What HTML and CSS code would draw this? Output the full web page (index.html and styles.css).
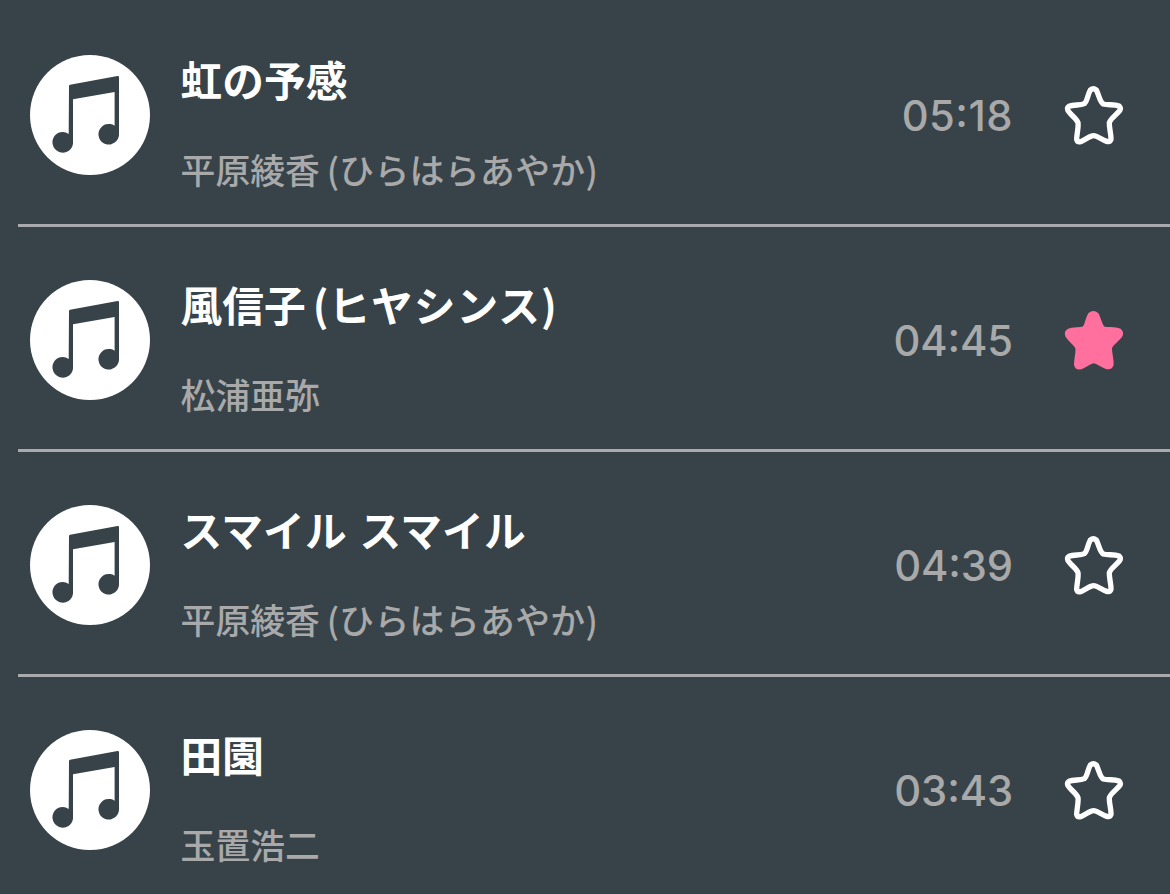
FILE: index.html
```html
<!DOCTYPE html>
<html lang="ja">
<head>
<meta charset="utf-8">
<title>Songs</title>
<link rel="stylesheet" href="styles.css">
</head>
<body>
<svg class="defs" aria-hidden="true">
  <symbol id="note" viewBox="0 0 120 120">
    <circle cx="60" cy="60" r="60" fill="#fff"/>
    <path fill="#374349" d="M39 31Q39 30 40 29.800L87.500 21Q89 20.800 89 22.200V80A10.300 10.300 0 1 1 84.600 70.800V37L43 44.300V88.500A10.300 10.300 0 1 1 38.700 78.900Z"/>
  </symbol>
  <symbol id="star" viewBox="0 0 270 240">
    <path d="M121 45Q130 37 139 45C147 60 150 82 160 87C174 91 192 87 207 93Q214 100 209 107C199 120 182 130 178 143C177 160 184 178 183 193Q180 202 170 199C155 195 142 182 131 182C119 182 107 195 92 200Q82 202 80 193C80 178 86 158 84 143C79 130 62 120 54 107Q50 98 57 94C72 88 90 92 103 86C112 80 113 59 121 45Z" stroke-width="16" stroke-linejoin="round"/>
  </symbol>
</svg>
<ul class="songs">
  <li class="song">
    <svg class="cover"><use href="#note"/></svg>
    <div class="info"><div class="title">虹の予感</div><div class="artist">平原綾香<span class="gap"></span>(<span class="kana">ひらはらあやか</span>)</div></div>
    <div class="time narrow">05:18</div>
    <svg class="star"><use href="#star"/></svg>
  </li>
  <li class="song">
    <svg class="cover"><use href="#note"/></svg>
    <div class="info"><div class="title">風信子<span class="gap"></span>(<span class="kana">ヒヤシンス</span>)</div><div class="artist">松浦亜弥</div></div>
    <div class="time">04:45</div>
    <svg class="star favorite"><use href="#star"/></svg>
  </li>
  <li class="song">
    <svg class="cover"><use href="#note"/></svg>
    <div class="info"><div class="title spaced">スマイル スマイル</div><div class="artist">平原綾香<span class="gap"></span>(<span class="kana">ひらはらあやか</span>)</div></div>
    <div class="time">04:39</div>
    <svg class="star"><use href="#star"/></svg>
  </li>
  <li class="song">
    <svg class="cover"><use href="#note"/></svg>
    <div class="info"><div class="title">田園</div><div class="artist">玉置浩二</div></div>
    <div class="time">03:43</div>
    <svg class="star"><use href="#star"/></svg>
  </li>
</ul>
</body>
</html>
```
FILE: styles.css
```css
* { box-sizing: border-box; }
body {
  margin: 0;
  height: 894px;
  overflow: hidden;
  background: #374349;
  font-family: "Noto Sans CJK JP", sans-serif;
}
.defs { display: none; }
.songs { list-style: none; margin: 0; padding: 2px 0 0 18px; }
.song {
  display: flex;
  align-items: center;
  height: 225px;
  padding: 0 30px 0 12px;
  border-bottom: 3px solid #a9a9ae;
}
.cover { flex: none; width: 120px; height: 120px; margin-top: 4px; }
.info { flex: 1; margin-left: 30.600px; padding-top: 17px; white-space: nowrap; }
.title { color: #fff; font-size: 41.700px; font-weight: 600; line-height: 60px; }
.title.spaced { word-spacing: 3px; letter-spacing: 0.200px; }
.artist { margin-top: 35px; color: #a9a9a9; font-size: 34.800px; font-weight: 500; line-height: 50px; }
.gap { display: inline-block; width: 7px; }
.kana { letter-spacing: 0.400px; }
.title .kana { letter-spacing: 1px; }
.time {
  color: #a9a9a9;
  font: 450 41.700px/50px Inter, sans-serif;
  font-feature-settings: "case";
  letter-spacing: -0.100px;
  margin-top: 5px;
}
.time.narrow { letter-spacing: 0.500px; margin-right: -1px; }
.star { flex: none; width: 90px; height: 80px; margin: 4px 0 0 37px; fill: none; stroke: #fff; }
.narrow + .star { margin-left: 38px; }
.star.favorite { fill: #ff709f; stroke: #ff709f; }
```
